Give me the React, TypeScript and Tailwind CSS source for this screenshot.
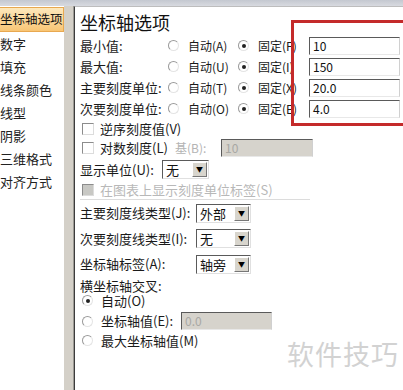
import React from 'react';

const Radio = ({ checked }: { checked?: boolean }) => (
  <span className="relative inline-flex h-[11px] w-[11px] shrink-0 items-center justify-center rounded-full border border-t-[#9a9a9a] border-l-[#9a9a9a] border-b-[#e4e4e4] border-r-[#e4e4e4] bg-white">
    {checked && <span className="h-[4px] w-[4px] rounded-full bg-[#222]" />}
  </span>
);

const Check = ({ disabled }: { disabled?: boolean }) => (
  <span
    className={`inline-block h-[12px] w-[12px] shrink-0 border border-t-[#8c8c8c] border-l-[#8c8c8c] border-b-[#dcdcdc] border-r-[#dcdcdc] ${
      disabled ? 'bg-[#c8c8c4]' : 'bg-white'
    }`}
  />
);

const Input = ({ value, disabled, w }: { value: string; disabled?: boolean; w: string }) => (
  <div
    className={`${w} flex h-[18px] shrink-0 items-center border border-t-[#5a5a5a] border-l-[#5a5a5a] border-b-[#e8e8e8] border-r-[#d0d0d0] px-[3px] text-[12px] ${
      disabled ? 'bg-[#d6d3cc] text-[#a8a8a4]' : 'bg-white text-[#111]'
    }`}
  >
    {value}
  </div>
);

const Select = ({ value, w }: { value: string; w: string }) => (
  <div className={`${w} flex h-[19px] shrink-0 items-center border border-t-[#5a5a5a] border-l-[#5a5a5a] border-b-[#e0e0e0] border-r-[#e0e0e0] bg-white`}>
    <span className="flex-1 pl-[3px] text-[13px] leading-none text-[#111]">{value}</span>
    <span className="mr-[1px] flex h-[15px] w-[15px] items-center justify-center border border-b-[#777] border-r-[#777] border-t-white border-l-white bg-[#d8d5cd] text-[7px] text-black">
      ▼
    </span>
  </div>
);

const menu = ['坐标轴选项', '数字', '填充', '线条颜色', '线型', '阴影', '三维格式', '对齐方式'];

const rows = [
  { label: '最小值:', auto: '自动(A)', fixed: '固定(F)', value: '10' },
  { label: '最大值:', auto: '自动(U)', fixed: '固定(I)', value: '150' },
  { label: '主要刻度单位:', auto: '自动(T)', fixed: '固定(X)', value: '20.0' },
  { label: '次要刻度单位:', auto: '自动(O)', fixed: '固定(E)', value: '4.0' },
];

export default function App() {
  return (
    <div
      className="relative flex h-[390px] w-[403px] flex-col overflow-hidden bg-white text-[13px] text-[#1a1a1a]"
      style={{ fontFamily: '"Noto Sans CJK SC", "Liberation Sans", sans-serif' }}
    >
      <div className="h-[6px] bg-gradient-to-b from-[#c4c8d0] to-[#d8dae0]" />
      <div className="flex flex-1">
        {/* left menu */}
        <div className="flex w-[64px] flex-col overflow-hidden bg-white pt-[1px]">
          {menu.map((m, i) => (
            <div
              key={m}
              className={`flex h-[23px] items-center whitespace-nowrap leading-none ${
                i === 0
                  ? 'h-[25px] border border-l-0 border-[#e8a850] bg-gradient-to-b from-[#fde8bc] to-[#f8c574] text-[12.5px] text-[#111]'
                  : 'text-[13px] text-[#222]'
              }`}
            >
              <span>{m}</span>
            </div>
          ))}
        </div>
        <div className="w-[10px] border-r border-r-[#9c9a94] bg-[#d4d0c8]" />
        {/* right panel */}
        <div className="flex flex-1 flex-col border-l border-t border-l-[#3c3c3c] border-t-[#bdbdbd] bg-white pl-[5px] pt-[3px]">
          <div className="h-[25px] text-[18px] leading-[24px] text-[#111]">坐标轴选项</div>
          <div className="flex flex-col">
            {rows.map((r) => (
              <div key={r.label} className="flex h-[21px] items-center">
                <span className="w-[88px] whitespace-nowrap">{r.label}</span>
                <span className="flex w-[70px] items-center gap-[9px]">
                  <Radio />
                  <span className="whitespace-nowrap text-[12px]">{r.auto}</span>
                </span>
                <span className="flex w-[71px] items-center gap-[9px]">
                  <Radio checked />
                  <span className="whitespace-nowrap text-[12px]">{r.fixed}</span>
                </span>
                <Input value={r.value} w="w-[91px]" />
              </div>
            ))}
          </div>
          <div className="flex h-[19px] items-center gap-[6px] pl-[2px]">
            <Check />
            <span>逆序刻度值(V)</span>
          </div>
          <div className="flex h-[20px] items-center pl-[2px]">
            <Check />
            <span className="ml-[6px] w-[75px] whitespace-nowrap">对数刻度(L)</span>
            <span className="w-[46px] text-[12px] text-[#b4b4b4]">基(B):</span>
            <Input value="10" disabled w="w-[92px]" />
          </div>
          <div className="flex h-[23px] items-center">
            <span className="w-[82px]">显示单位(U):</span>
            <Select value="无" w="w-[47px]" />
          </div>
          <div className="flex h-[17px] items-center gap-[6px] pl-[2px] leading-none text-[#b8b8b8]">
            <Check disabled />
            <span>在图表上显示刻度单位标签(S)</span>
          </div>
          <div className="mt-[1px] h-px w-[230px] bg-[#dcdcdc]" />
          <div className="flex h-[26px] items-center">
            <span className="w-[116px] whitespace-nowrap">主要刻度线类型(J):</span>
            <Select value="外部" w="w-[55px]" />
          </div>
          <div className="flex h-[25px] items-center">
            <span className="w-[116px] whitespace-nowrap">次要刻度线类型(I):</span>
            <Select value="无" w="w-[55px]" />
          </div>
          <div className="flex h-[26px] items-center">
            <span className="w-[116px] whitespace-nowrap">坐标轴标签(A):</span>
            <Select value="轴旁" w="w-[55px]" />
          </div>
          <div className="flex h-[16px] items-center leading-none">横坐标轴交叉:</div>
          <div className="flex h-[15px] items-center gap-[8px] pl-[2px] leading-none">
            <Radio checked />
            <span>自动(O)</span>
          </div>
          <div className="flex h-[26px] items-center pl-[2px]">
            <Radio />
            <span className="ml-[8px] w-[80px] whitespace-nowrap">坐标轴值(E):</span>
            <Input value="0.0" disabled w="w-[91px]" />
          </div>
          <div className="flex h-[13px] items-center gap-[8px] pl-[2px] leading-none">
            <Radio />
            <span>最大坐标轴值(M)</span>
          </div>
        </div>
      </div>
      {/* red annotation */}
      <div className="absolute left-[291px] top-[20px] h-[106px] w-[120px] border-[3px] border-[#c42a2a]" />
      {/* watermark */}
      <div className="absolute left-[287px] top-[340px] text-[27px] leading-none tracking-[1px] text-[#d2d2d2]">软件技巧</div>
    </div>
  );
}
